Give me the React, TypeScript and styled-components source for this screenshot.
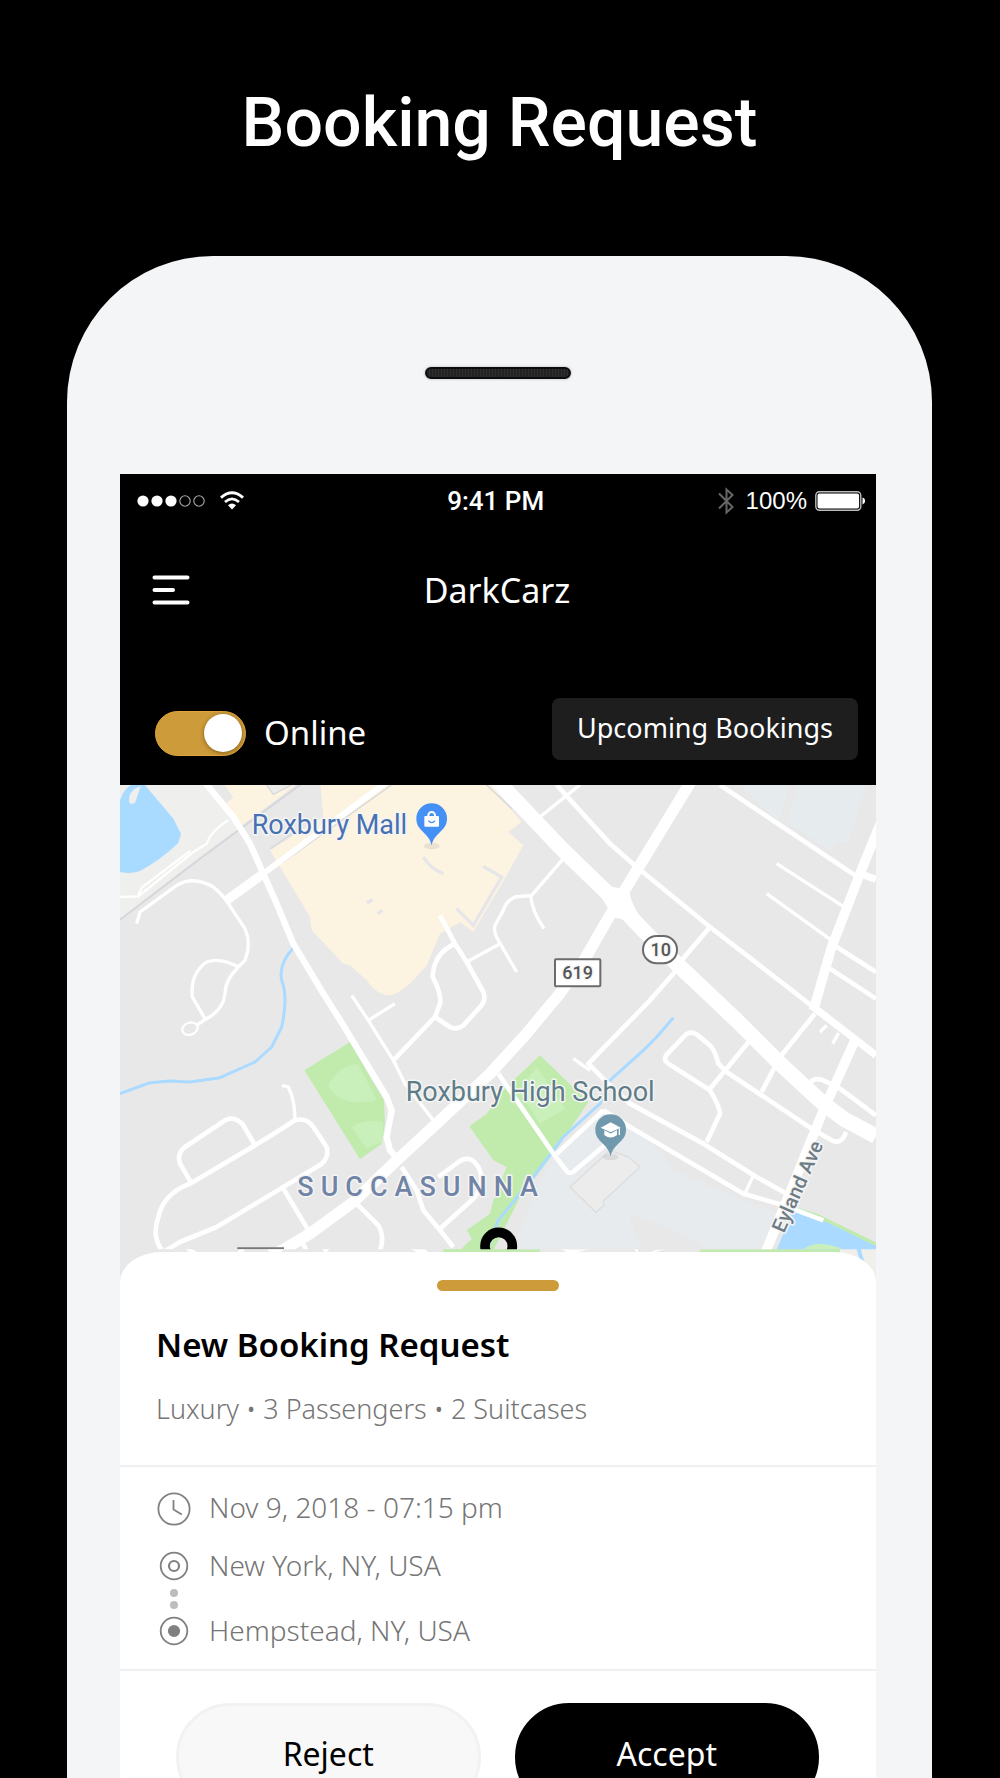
import React, { useState } from "react";
import styled, { createGlobalStyle } from "styled-components";

const GlobalStyle = createGlobalStyle`
  * { box-sizing: border-box; }
  body { margin: 0; background: #000; }
  h1, h2, p, ul { margin: 0; padding: 0; }
  button { font: inherit; border: 0; padding: 0; cursor: pointer; }
`;

const uiFont = `"Noto Sans", "Open Sans", sans-serif`;
const gold = "#cd9b3a";

const Page = styled.main`
  height: 100vh;
  overflow: hidden;
  display: flex;
  flex-direction: column;
  background: #000;
  padding: 0 68px 0 67px;
  font-family: ${uiFont};
`;

const Headline = styled.h1`
  padding-top: 80px;
  height: 256px;
  flex: none;
  color: #fff;
  text-align: center;
  font: 500 68px/86px Roboto, sans-serif;
`;

const Phone = styled.section`
  flex: 1 0 auto;
  display: flex;
  flex-direction: column;
  background: #f3f5f7;
  border-radius: 146px 146px 0 0;
  padding: 0 56px 0 53px;
`;

const Bezel = styled.div`
  height: 218px;
  padding-top: 111px;
`;

const Speaker = styled.div`
  width: 146px;
  height: 12px;
  margin: 0 auto;
  border-radius: 6px;
  border: 2px solid #0c0c0d;
  background: repeating-linear-gradient(90deg, #222 0 2px, #303032 2px 3px);
  box-shadow: 0 0 2px 1px #d4d5d8;
`;

const Screen = styled.div`
  background: #fff;
`;

const TopBar = styled.header`
  background: #000;
  color: #fff;
  height: 311px;
`;

const StatusBar = styled.div`
  display: grid;
  grid-template-columns: 29fr auto 30fr;
  align-items: center;
  height: 54px;
  padding: 0 10px 0 16px;
  font: 400 24px/28px "Liberation Sans", Arial, sans-serif;
`;

const StatusSide = styled.div<{ $end?: boolean }>`
  display: flex;
  align-items: center;
  justify-content: ${(p) => (p.$end ? "flex-end" : "flex-start")};
  gap: ${(p) => (p.$end ? 12 : 14)}px;
`;

const Charge = styled.span`
  display: flex;
  align-items: center;
  gap: 8px;
`;

const Clock = styled.span`
  font-family: Roboto, sans-serif;
  font-weight: 500;
  font-size: 26px;
`;

const TitleRow = styled.div`
  display: grid;
  grid-template-columns: 1fr auto 1fr;
  align-items: center;
  height: 124px;
  padding: 0 34px 0 32px;
`;

const MenuButton = styled.button`
  width: 38px;
  height: 30px;
  background: none;
  color: #fff;
  svg { display: block; }
`;

const AppTitle = styled.h2`
  font-size: 34px;
  line-height: 46px;
  font-weight: 400;
`;

const ModeRow = styled.div`
  display: flex;
  align-items: center;
  justify-content: space-between;
  margin-top: 46px;
  height: 62px;
  padding: 0 18px 0 35px;
`;

const SwitchLabel = styled.label`
  display: flex;
  align-items: center;
  gap: 18px;
  padding-top: 8px;
  font-size: 33px;
  line-height: 48px;
`;

const Switch = styled.input`
  appearance: none;
  margin: 0;
  width: 91px;
  height: 45px;
  padding: 2px 3px;
  border: 1px solid #e0a63c;
  border-radius: 23px;
  background: #777;
  display: flex;
  align-items: center;
  &::before {
    content: "";
    width: 38px;
    height: 38px;
    border-radius: 50%;
    background: #fff;
    box-shadow: 0 1px 4px rgba(80, 50, 0, 0.6);
  }
  &:checked {
    background: ${gold};
    justify-content: flex-end;
  }
`;

const UpcomingButton = styled.button`
  && {
    height: 62px;
    padding: 0 25px 3px;
    border-radius: 8px;
    background: #1e1e1e;
    color: #fff;
    font-size: 27px;
    line-height: 38px;
  }
`;

const MapArea = styled.div`
  height: 510px;
  background: #e8e8e8;
  svg { display: block; width: 100%; height: 100%; }
`;

const Sheet = styled.section`
  position: relative;
  margin-top: -43px;
  background: #fff;
  border-radius: 42px 42px 0 0 / 30px 30px 0 0;
`;

const Handle = styled.div`
  width: 122px;
  height: 11px;
  border-radius: 6px;
  background: ${gold};
  margin: 0 auto;
`;

const Summary = styled.div`
  padding: 28px 37px 0 36px;
  height: 213px;
`;

const RequestTitle = styled.h2`
  margin-top: 30px;
  font-size: 33px;
  line-height: 48px;
  font-weight: 600;
  color: #000;
`;

const Meta = styled.p`
  margin-top: 21px;
  font-size: 27px;
  line-height: 38px;
  font-weight: 300;
  color: #757575;
`;

const Trip = styled.ul`
  list-style: none;
  border-top: 2px solid #f0f0f0;
  border-bottom: 2px solid #f0f0f0;
  padding: 22px 36px 17px;
  color: #757575;
  font-size: 28px;
  line-height: 36px;
  font-weight: 300;
`;

const TripRow = styled.li<{ $gap?: number }>`
  display: flex;
  align-items: center;
  gap: 17px;
  height: 40px;
  margin-top: ${(p) => p.$gap ?? 0}px;
  svg { flex: none; display: block; }
  span { padding-bottom: 4px; }
`;

const Connector = styled.li`
  display: flex;
  flex-direction: column;
  align-items: center;
  gap: 4px;
  width: 36px;
  height: 25px;
  padding-top: 2px;
`;

const Dot = styled.i`
  width: 8px;
  height: 8px;
  border-radius: 50%;
  background: #bdbdbd;
`;

const Actions = styled.div`
  display: grid;
  grid-template-columns: 1fr 1fr;
  gap: 34px;
  padding: 32px 57px 32px 56px;
`;

const ActionButton = styled.button<{ $primary?: boolean }>`
  && {
    height: 108px;
    padding-bottom: 6px;
    border-radius: 56px;
    border: 3px solid ${(p) => (p.$primary ? "#000" : "#f2f2f2")};
    background: ${(p) => (p.$primary ? "#000" : "#f8f8f8")};
    color: ${(p) => (p.$primary ? "#fff" : "#000")};
    font-size: 32px;
    line-height: 42px;
  }
`;

const SignalDots = () => (
  <svg width="70" height="14" viewBox="0 0 70 14" aria-hidden="true">
    {[7, 21, 35].map((x) => <circle key={x} cx={x} cy="7" r="5.6" fill="#fff" />)}
    {[49, 63].map((x) => <circle key={x} cx={x} cy="7" r="5.2" fill="none" stroke="#aaa" strokeWidth="1.1" />)}
  </svg>
);

const Wifi = () => (
  <svg width="24" height="20" viewBox="0 0 24 20" fill="none" stroke="#fff" strokeWidth="2.8" aria-hidden="true">
    <path d="M1 6.6Q12-3.2 23 6.6M5 11Q12 4.8 19 11" />
    <path d="M12 18.6 8 14.2Q12 11 16 14.2Z" fill="#fff" stroke="none" />
  </svg>
);

const Bluetooth = () => (
  <svg width="16" height="28" viewBox="0 0 16 28" fill="none" stroke="#666" strokeWidth="2" aria-hidden="true">
    <path d="M1 6.5 14.5 20 8.5 25.5V2.5L14.5 8 1 21.5" />
  </svg>
);

const Battery = () => (
  <svg width="51" height="20" viewBox="0 0 51 20" aria-hidden="true">
    <rect x="0.8" y="0.8" width="45" height="18.4" rx="3.6" fill="none" stroke="#bbb" strokeWidth="1.4" />
    <rect x="2.5" y="2.5" width="41.6" height="15" rx="2" fill="#fff" />
    <path d="M47.5 6.5q2.6.6 2.6 3.5t-2.6 3.5z" fill="#fff" />
  </svg>
);

const ClockIcon = () => (
  <svg width="36" height="36" viewBox="0 0 36 36" fill="none" stroke="#808080" strokeWidth="1.8" aria-hidden="true">
    <circle cx="18" cy="18" r="15.6" />
    <path d="M17.5 9v9.5l8.3 5" strokeLinejoin="round" />
  </svg>
);

const PointIcon = ({ filled }: { filled?: boolean }) => (
  <svg width="36" height="36" viewBox="0 0 36 36" fill="none" stroke="#808080" strokeWidth="1.8" aria-hidden="true">
    <circle cx="18" cy="17" r="13.3" />
    <circle cx="18" cy="17" r="5" fill={filled ? "#808080" : "none"} strokeWidth="2.2" />
  </svg>
);

const thinRoads = [
  "M80 430 90 395 200 315Q250 285 310 320 340 345 355 370L405 445Q425 490 405 540L385 560Q345 600 345 640 340 690 285 718L258 736",
  "M385 560Q330 530 290 545 240 580 247 650L285 715",
  "M725 645 775 720 855 670M775 720 850 840 885 910 978 1030",
  "M1070 545 1170 490",
  "M1360 235 1265 345 1215 350Q1190 360 1180 390L1155 435Q1150 455 1165 480L1220 575M1262 345Q1265 390 1302 445",
  "M1410 14 1370 45 1290 110",
  "M2000 250 2210 385M1970 340 2165 480",
  "M2150 735 2130 755M2186 758 2168 790",
  "M555 1020Q555 960 535 920L515 915",
  "M1930 1185 1905 1240M1390 835 1440 870",
];

const midRoads = [
  "M990 405 1035 490 1070 545 1120 635Q1130 660 1110 680L1060 735Q1040 750 1020 740L975 710",
  "M1035 490Q970 520 968 590 995 640 990 670L975 710 850 840",
  "M1340 14 1500 190 1580 260 1800 440 2110 680",
  "M1800 440 1715 540 1690 580 1620 660 1435 850 1500 915 1560 970 1780 1090 1940 1190 2030 1240",
  "M1830 14 2250 295",
  "M2165 490 2298 575M2160 565 2298 655",
  "M2115 700 2010 830 1955 935",
  "M1725 765 1668 825Q1660 840 1675 850L1800 930Q1830 980 1830 1000L1790 1085M1920 780 1800 925",
  "M1725 765Q1740 750 1760 762L1800 795Q1815 810 1825 850L1850 875 2105 1045 2165 1080Q2195 1095 2208 1055",
  "M2100 915Q2105 888 2140 900L2190 925 2298 1005",
  "M1480 990 1560 1040 1900 1240 2020 1275 2140 1320",
  "M1165 880 1330 1120 1370 1172Q1380 1185 1395 1170L1490 1090M1480 990 1340 1120",
  "M155 1408Q125 1370 145 1310 160 1240 240 1210L435 1095 500 1055 555 1020Q590 1010 610 1040L650 1100Q660 1140 620 1160L320 1340 210 1385 165 1412",
  "M245 1210 210 1150Q200 1120 225 1100L345 1020Q375 1005 400 1035L435 1095",
  "M520 1225 595 1350M570 1375 590 1410M740 1270 805 1335Q825 1370 810 1410",
  "M875 1160 920 1230 940 1290 990 1350 1030 1400",
  "M985 1190 1045 1145Q1080 1120 1105 1160 1130 1210 1090 1255L990 1345",
];

const Pin = ({ x, y, color, children }: { x: number; y: number; color: string; children: React.ReactNode }) => (
  <g transform={`translate(${x} ${y})`}>
    <ellipse cx="0" cy="82" rx="24" ry="10" fill="#000" opacity="0.07" />
    <path d="M0 80C-8 40-46 38-46 0a46 46 0 0 1 92 0C46 38 8 40 0 80Z" fill={color} />
    {children}
  </g>
);

const StreetMap = () => (
  <svg viewBox="30 14 2268 1530" preserveAspectRatio="xMidYMin slice" role="img" aria-label="Map of Succasunna">
    <defs>
      <clipPath id="mapTile"><rect x="0" y="0" width="2400" height="1407" /></clipPath>
    </defs>
    <rect x="0" y="1400" width="2400" height="200" fill="#e8e8e8" />
    <rect x="2170" y="1400" width="200" height="200" fill="#f0efec" />
    <path d="M1000 1412h290M1770 1412h420" stroke="#c0ebad" strokeWidth="14" />
    <path d="M226 1405l16 14h24l-20-14zM390 1405l-10 14h18l8-14zM470 1405l12 14h24l20-14zM660 1405l-26 0 14 14zM900 1405h44l16 14h-32zM1350 1405h90q-40 14-70 10zM1570 1405h14v14zM1620 1419q10-14 50-14z" fill="#fff" />
    <path d="M2244 1400 2260 1455" stroke="#aadaff" strokeWidth="12" />
    <g clipPath="url(#mapTile)">
      <rect x="0" y="0" width="2400" height="1420" fill="#e8e8e8" />
      <path d="M30 0H270L390 145 30 415Z" fill="#efefed" />
      <path d="M30 60Q45 14 80 8L105 14 190 115 213 160 205 188Q150 240 90 272 60 283 30 275Z" fill="#a9daff" />
      <path d="M58 68Q52 30 92 18L75 68Q65 72 58 68Z" fill="#efefed" />
      <path d="M335 0H575L390 140 330 80 370 52ZM480 210 640 110 630 0H1130L1235 125 1195 155 1240 195 1190 285 1090 455 1050 425 990 460 950 555Q880 640 840 645 800 645 770 600L720 555 700 550 605 450 600 410Z" fill="#fcf3e1" />
      <path d="M470 14 490 42 545 14" fill="#eeecea" stroke="#d9d9dd" strokeWidth="4" />
      <path d="M1890 14H2040L2005 125ZM2065 14H2270L2215 185H2175L2165 215 2030 125Z" fill="#e6ebee" />
      <path d="M583 870 720 785 780 890 822 960 825 1030 815 1090 750 1137Z" fill="#c0ebad" />
      <path d="M655 915Q690 850 745 852L765 890 800 960Q690 985 655 915ZM725 1040Q760 1015 820 1025L815 1085 770 1105Z" fill="#c9efbb" />
      <path d="M1480 1000 1570 1050 1650 1110 1690 1170 1900 1260 2010 1300 1960 1420H1200L1240 1330 1290 1200 1340 1120Z" fill="#e7ebee" />
      <path d="M1555 1300 1680 1345 1770 1390 1810 1420H1600Z" fill="#e8e8e8" />
      <path d="M1290 825 1435 965 1330 1120 1230 1250 1145 1420H1040L1085 1375 1070 1350 1140 1300 1150 1260 1190 1160 1150 1140 1078 1038 1130 1000 1180 930 1215 895Z" fill="#c0ebad" />
      <path d="M1280 860 1365 985 1290 1030 1225 930Z" fill="#c9efbb" />
      <path d="M1380 1220 1500 1110 1555 1130 1590 1160 1480 1262 1482 1275 1458 1296Z" fill="#ececec" stroke="#dcdddd" strokeWidth="4" />
      <path d="M2052 1285 2120 1310 2298 1395V1420H1995Z" fill="#aadaff" />
      <path d="M2052 1285 2120 1305 2298 1392" fill="none" stroke="#c0ebad" strokeWidth="10" />
      <path d="M2080 1407Q2120 1375 2200 1407Z" fill="#c9efbb" />
      <g fill="none" stroke="#aadaff" strokeWidth="9" strokeLinejoin="round">
        <path d="M550 503Q505 550 515 600 535 650 515 740L485 800 435 845 330 892 240 905 180 902 120 907 30 940" />
        <path d="M1690 712 1640 770 1600 810 1500 900 1470 970 1360 1070 1270 1190 1165 1320 1130 1410" />
      </g>
      <g fill="none" stroke="#d6d7db" strokeWidth="6">
        <path d="M575 10 270 235 30 418" />
        <path d="M1130 14 1205 85M480 206 560 150M520 245 850 10" strokeWidth="4" />
        <path d="M940 230Q960 265 1000 280M1120 258 1175 290 1090 435 1040 385M770 368 788 358M802 400 818 390" stroke="#e6e6ea" strokeWidth="10" />
      </g>
      <g fill="none" stroke="#fff" strokeLinejoin="round">
        <g strokeWidth="7">
          <path d="M30 350 85 348 250 215 290 190Q305 150 355 120M85 345 95 322 240 212" />
          <ellipse cx="240" cy="745" rx="24" ry="18" transform="rotate(-20 240 745)" />
        </g>
        <g strokeWidth="10">{thinRoads.map((d) => <path key={d} d={d} />)}</g>
        <g strokeWidth="14">{midRoads.map((d) => <path key={d} d={d} />)}</g>
        <path d="M280 0 370 110 420 190 460 280 500 370 550 490 640 640 700 735 800 900 830 950 845 990 830 1070 840 1110 862 1135" strokeWidth="19" />
        <path d="M830 5 460 280" strokeWidth="18" />
        <path d="M460 280 350 360" strokeWidth="28" />
        <path d="M2110 680 2240 780 2298 825M2250 280 2298 297" strokeWidth="22" />
        <path d="M2315 120 2250 280 2165 500 2110 690M2235 780 2140 990 1965 1420" strokeWidth="29" />
        <path d="M1745 0 1580 270 1520 370 1425 535 1345 645 1245 765 1140 880 980 1030 860 1140 730 1265 600 1360 500 1420" strokeWidth="34" />
        <path d="M1160 0 1355 205 1520 365 1600 450 1700 550 1880 720 2010 850 2140 970 2200 1015 2298 1068" strokeWidth="46" />
      </g>
      <path d="M1450 290Q1500 330 1540 322L1560 335Q1555 350 1600 430L1560 430Q1530 410 1502 412 1500 380 1450 320Z" fill="#fff" />
      <path d="M382 1404h140" stroke="#777" strokeWidth="6" />
      <circle cx="1166" cy="1397" r="41" fill="none" stroke="#000" strokeWidth="29" />
    </g>
    <Pin x={965} y={115} color="#4590f5">
      <rect x="-22" y="-8" width="44" height="32" rx="3" fill="#fff" />
      <path d="M-10-6v-4a10 10 0 0 1 20 0v4" fill="none" stroke="#fff" strokeWidth="6" />
      <path d="M-10 6Q0 18 10 6" fill="none" stroke="#4590f5" strokeWidth="4" />
    </Pin>
    <Pin x={1502} y={1048} color="#7199ae">
      <path d="M-30-6 0-22 30-6 0 8Z" fill="#fff" />
      <path d="M-17 5v10Q0 28 17 15V5L0 14ZM26-4v20" fill="#fff" stroke="#fff" strokeWidth="4" />
    </Pin>
    <rect x="1335" y="537" width="136" height="81" rx="3" fill="#fff" stroke="#6b6b6b" strokeWidth="6" />
    <rect x="1599" y="467" width="102" height="82" rx="41" fill="#fff" stroke="#6b6b6b" strokeWidth="6" />
    <g fontFamily="Roboto, sans-serif" stroke="#f5f5f5" strokeWidth="9" strokeLinejoin="round" paintOrder="stroke">
      <g fontSize="54" fontWeight="500" fill="#555" textAnchor="middle">
        <text x="1403" y="597">619</text>
        <text x="1652" y="528">10</text>
      </g>
      <g fontSize="81">
        <text x="425" y="160" fill="#4771b0">Roxbury Mall</text>
        <text x="887" y="962" fill="#5e7c88">Roxbury High School</text>
        <text x="562" y="1247" fill="#7184a6" fontWeight="500" letterSpacing="21">SUCCASUNNA</text>
      </g>
      <text transform="translate(2022 1360) rotate(-66)" fontSize="60" fontWeight="500" fill="#6d7c85">Eyland Ave</text>
    </g>
  </svg>
);

export default function App() {
  const [online, setOnline] = useState(true);
  return (
    <Page>
      <GlobalStyle />
      <Headline>Booking Request</Headline>
      <Phone>
        <Bezel><Speaker /></Bezel>
        <Screen>
          <TopBar>
            <StatusBar>
              <StatusSide><SignalDots /><Wifi /></StatusSide>
              <Clock>9:41 PM</Clock>
              <StatusSide $end>
                <Bluetooth />
                <Charge>100%<Battery /></Charge>
              </StatusSide>
            </StatusBar>
            <TitleRow>
              <MenuButton type="button" aria-label="Menu">
                <svg width="38" height="30" viewBox="0 0 38 30" stroke="#fff" strokeWidth="4" strokeLinecap="round">
                  <path d="M2.5 2.5h33M2.5 15h18.5M2.5 27.5h33" />
                </svg>
              </MenuButton>
              <AppTitle>DarkCarz</AppTitle>
            </TitleRow>
            <ModeRow>
              <SwitchLabel>
                <Switch type="checkbox" role="switch" checked={online} onChange={(e) => setOnline(e.target.checked)} />
                Online
              </SwitchLabel>
              <UpcomingButton type="button">Upcoming Bookings</UpcomingButton>
            </ModeRow>
          </TopBar>
          <MapArea><StreetMap /></MapArea>
          <Sheet>
            <Summary>
              <Handle />
              <RequestTitle>New Booking Request</RequestTitle>
              <Meta>Luxury • 3 Passengers • 2 Suitcases</Meta>
            </Summary>
            <Trip>
              <TripRow><ClockIcon /><span>Nov 9, 2018 - 07:15 pm</span></TripRow>
              <TripRow $gap={18}><PointIcon /><span>New York, NY, USA</span></TripRow>
              <Connector><Dot /><Dot /></Connector>
              <TripRow><PointIcon filled /><span>Hempstead, NY, USA</span></TripRow>
            </Trip>
            <Actions>
              <ActionButton type="button">Reject</ActionButton>
              <ActionButton type="button" $primary>Accept</ActionButton>
            </Actions>
          </Sheet>
        </Screen>
      </Phone>
    </Page>
  );
}
